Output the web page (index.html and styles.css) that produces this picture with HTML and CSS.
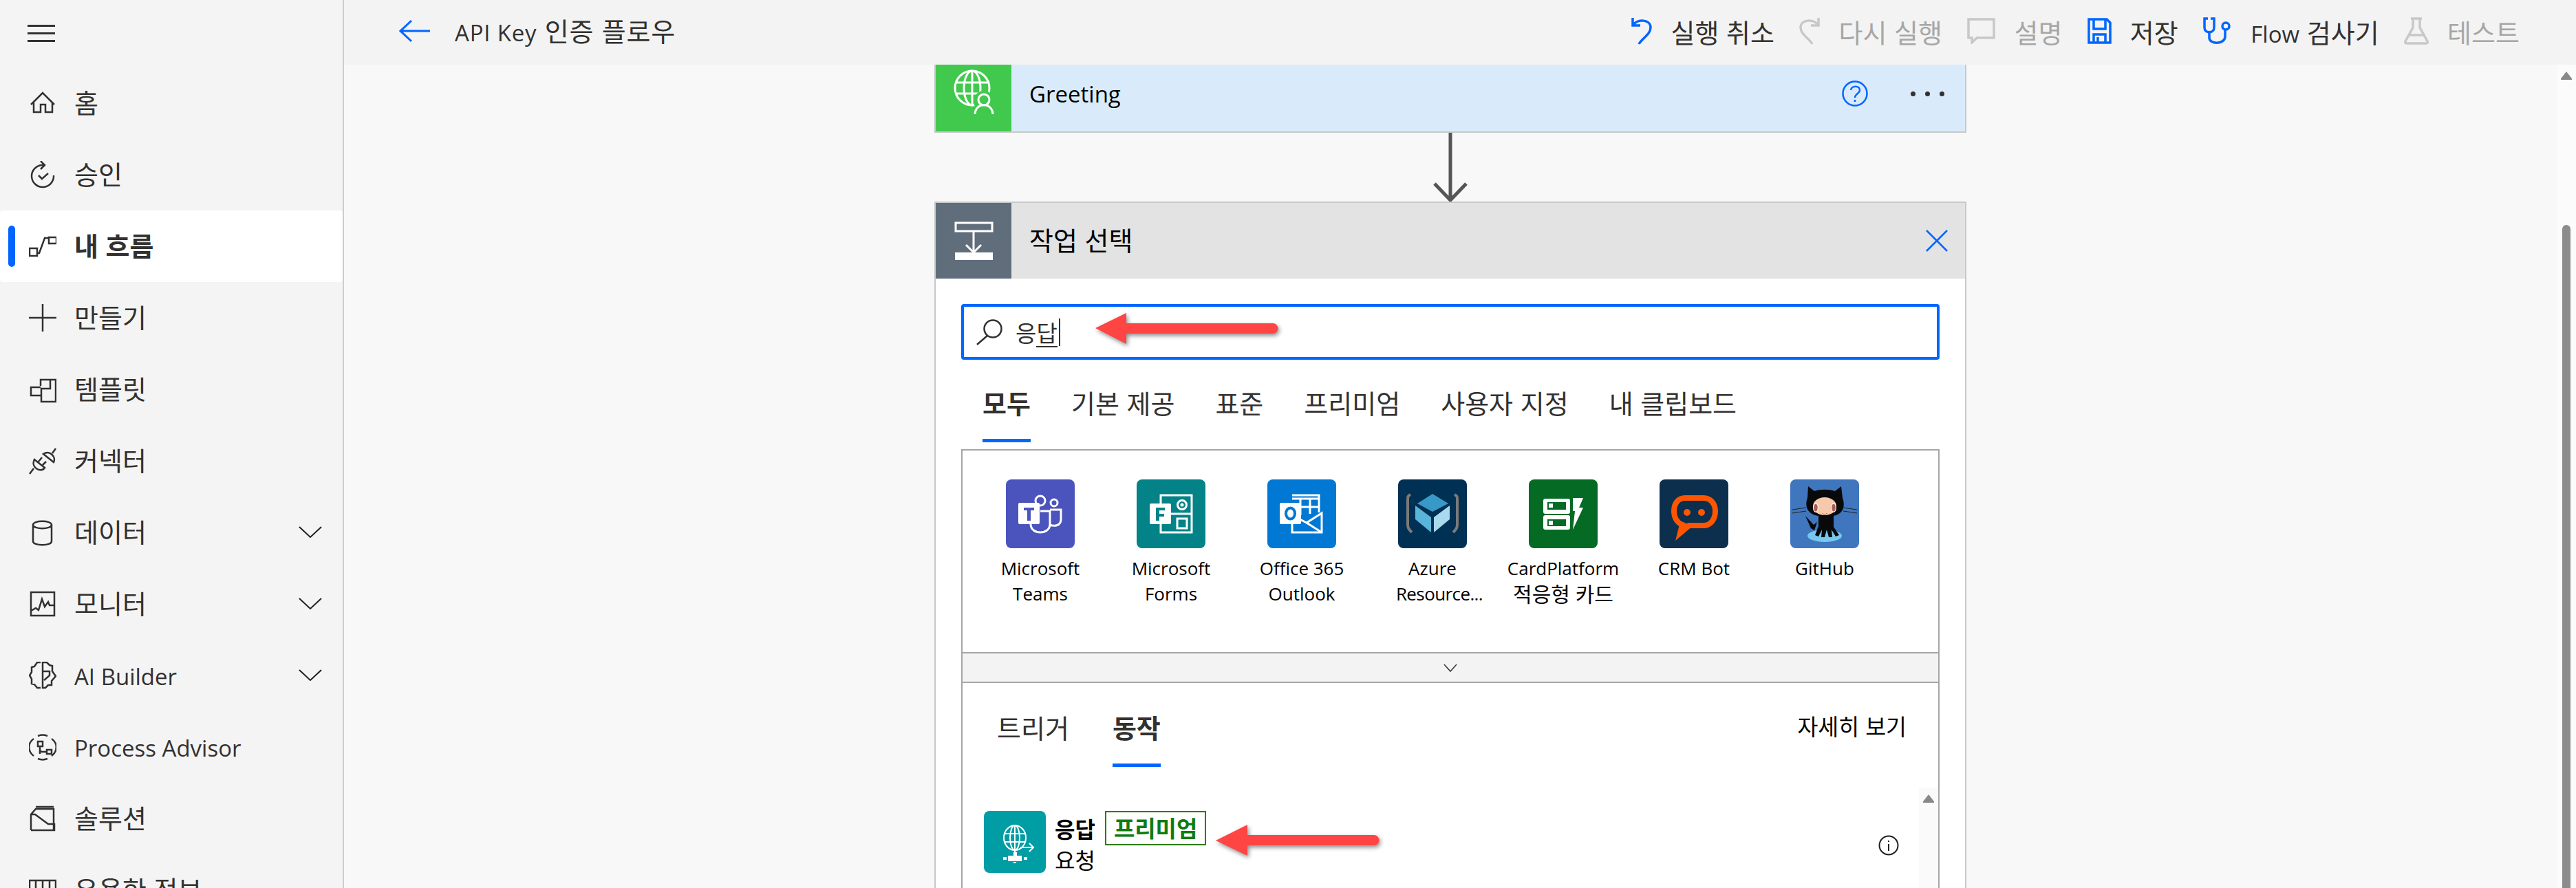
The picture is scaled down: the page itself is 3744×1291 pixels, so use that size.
FILE: index.html
```html
<!DOCTYPE html>
<html lang="ko">
<head>
<meta charset="utf-8">
<title>API Key 인증 플로우</title>
<link rel="stylesheet" href="styles.css">
</head>
<body>
<div class="app">
  <aside class="sidebar">
    <div class="burger-row">
      <svg class="burger" viewBox="0 0 40 25"><path d="M0 1.5H40M0 12.5H40M0 23.5H40"/></svg>
    </div>
    <nav class="nav">
      <a class="nav-item"><svg class="nav-icon" viewBox="0 0 40 40"><path d="M3 22 20 5l17 17M7 19v14h10V22h7v11h10V19"/></svg><span class="ko-label">홈</span></a>
      <a class="nav-item"><svg class="nav-icon" viewBox="0 0 40 40"><path d="M22 6h-3a16 16 0 1 0 17 15M17 0l6 6-6 6M14 21l5 5 9-8"/></svg><span class="ko-label">승인</span></a>
      <a class="nav-item active"><svg class="nav-icon" viewBox="0 0 40 40"><path d="M1 23h11v11H1zM29 7h11v9H29zM12 30h3l8-22h6"/></svg><span class="ko-label">내 흐름</span></a>
      <a class="nav-item"><svg class="nav-icon" viewBox="0 0 40 40"><path d="M20 0v40M0 20h40"/></svg><span class="ko-label">만들기</span></a>
      <a class="nav-item"><svg class="nav-icon" viewBox="0 0 40 40"><path d="M17 15V6h22v32H18v-9H3V17h14M31 6v13H18v10"/></svg><span class="ko-label">템플릿</span></a>
      <a class="nav-item"><svg class="nav-icon" viewBox="0 0 40 40"><path d="M21 10 36 22C40 14 30 4 21 10zM34 9l5-7M8 18 23 30C18 38 2 30 8 18zM7 31l-6 8M14 21l5-6M20 26l5-5"/></svg><span class="ko-label">커넥터</span></a>
      <a class="nav-item"><svg class="nav-icon" viewBox="0 0 40 40"><path d="M6 9c0-7 27-7 27 0v24c0 7-27 7-27 0zM6 9c0 7 27 7 27 0"/></svg><span class="ko-label">데이터</span><svg class="nav-chev" viewBox="0 0 34 18"><path d="M1 1l16 15L33 1"/></svg></a>
      <a class="nav-item"><svg class="nav-icon" viewBox="0 0 40 40"><path d="M3 3h34v34H3zM3 30l7-4 4 3 5-16 4 11 5-7 2 5h7"/></svg><span class="ko-label">모니터</span><svg class="nav-chev" viewBox="0 0 34 18"><path d="M1 1l16 15L33 1"/></svg></a>
      <a class="nav-item"><svg class="nav-icon" viewBox="0 0 40 40"><path d="M17 1h-5l-4 6-4 1v7l-3 5 3 5v7l4 1 4 5h5M21 1h-1v37h4l4-4h5v-6l6-7-5-7V6l-4-1-4-4zM21 14h9v6l-8 7"/></svg><span class="latin nudge">AI Builder</span><svg class="nav-chev" viewBox="0 0 34 18"><path d="M1 1l16 15L33 1"/></svg></a>
      <a class="nav-item"><svg class="nav-icon" viewBox="0 0 40 40"><path d="M7 8C-2 14-2 26 7 33M33 8c9 6 9 18 0 25M13 4c5-2 9-2 14 0M13 37c5 2 9 2 14 0M13 12h7v7h-7zM26 24h7v6h-7zM16 19v4c0 5 3 4 10 4M16 24v6"/></svg><span class="latin nudge">Process Advisor</span></a>
      <a class="nav-item"><svg class="nav-icon" viewBox="0 0 40 40"><path d="M3 37V14l7-8h26v6M10 3h26M36 6v30M3 37h34V28H28L9 14H3"/></svg><span class="ko-label">솔루션</span></a>
      <a class="nav-item"><svg class="nav-icon" viewBox="0 0 40 40"><path d="M1 6h38v30H1zM10 6v30M20 6v30M30 6v30"/></svg><span class="ko-label">유용한 정보</span></a>
    </nav>
  </aside>

  <main class="main">
    <header class="topbar">
      <svg class="back" viewBox="0 0 46 34"><path d="M45 17H2M18 2 2 17l16 15"/></svg>
      <h1 class="title"><span class="latin">API Key</span> 인증 플로우</h1>
      <div class="toolbar">
        <div class="tool"><svg class="tool-icon blue" width="30" height="40" viewBox="0 0 30 40"><path d="M2 1v11h11M3 11C9 2 28 3 28 15c0 10-13 16-17 24"/></svg><span>실행 취소</span></div>
        <div class="tool off"><svg class="tool-icon grey" width="30" height="40" viewBox="0 0 30 40"><path d="M28 1v11H17M27 11C21 2 2 3 2 15c0 10 13 16 17 24"/></svg><span>다시 실행</span></div>
        <div class="tool off"><svg class="tool-icon grey" width="41" height="38" viewBox="0 0 41 38"><path d="M2 2h37v27H14l-7 7v-7H2z"/></svg><span>설명</span></div>
        <div class="tool"><svg class="tool-icon blue" width="35" height="38" viewBox="0 0 35 38"><path d="M2 2h26l5 5v29H2zM9 2v14h17V2M9 36V24h17v12M15 28v8"/></svg><span>저장</span></div>
        <div class="tool"><svg class="tool-icon blue" width="42" height="40" viewBox="0 0 42 40"><path d="M7 2H2v13c0 9 14 9 14 0V2h-5M9 23v7c0 10 23 10 23-2V18"/><circle cx="33" cy="13" r="5"/></svg><span><span class="latin">Flow</span> 검사기</span></div>
        <div class="tool off"><svg class="tool-icon grey" width="36" height="40" viewBox="0 0 36 40"><path d="M10 2h16M13 2v13L2 35c-1 2 0 3 2 3h28c2 0 3-1 2-3L23 15V2M7 26h22"/></svg><span>테스트</span></div>
      </div>
    </header>

    <section class="canvas">
      <div class="flow">
        <article class="card greet">
          <div class="card-head">
            <div class="card-icon green">
              <svg width="110" height="110" viewBox="0 0 110 110"><g class="ws"><circle cx="53" cy="47" r="25"/><ellipse cx="53" cy="47" rx="12" ry="25"/><path d="M53 22v50M29 39h49M29 55h49"/></g><circle cx="70" cy="66" r="15" fill="#41c94e"/><g class="ws"><circle cx="70" cy="64" r="8"/><path d="M57 85c1-18 25-18 26 0"/></g></svg>
            </div>
            <span class="card-title latin-black">Greeting</span>
            <svg class="help" width="38" height="38" viewBox="0 0 38 38"><circle cx="19" cy="19" r="17.5"/><path d="M13 14c1-7 13-7 13 0 0 5-7 5-7 11"/><path d="M19 28v3"/></svg>
            <div class="dots"><i></i><i></i><i></i></div>
          </div>
        </article>

        <div class="link"><svg width="60" height="100" viewBox="0 0 60 100"><path class="link-path" d="M30 0v97M7 74l23 24 23-24"/></svg></div>

        <article class="card action">
          <div class="card-head grey-head">
            <div class="card-icon slate">
              <svg width="110" height="110" viewBox="0 0 110 110"><g class="ws"><path d="M29 29h53v12H29zM55 41v31M44 61l11 11 11-11"/></g><path class="wf" d="M28 72h55v11H28z"/></svg>
            </div>
            <span class="card-title ko-label">작업 선택</span>
            <svg class="close" width="32" height="32" viewBox="0 0 32 32"><path d="M1 1l30 30M31 1 1 31"/></svg>
          </div>
          <div class="card-body">
            <div class="search">
              <svg class="mag" width="38" height="38" viewBox="0 0 38 38"><circle cx="24" cy="14" r="12.5"/><path d="M16 24 1 37"/></svg>
              <span class="query">응<span class="composing">답</span></span><i class="caret"></i>
            </div>
            <div class="tabs">
              <span class="tab on">모두</span><span class="tab">기본 제공</span><span class="tab">표준</span><span class="tab">프리미엄</span><span class="tab">사용자 지정</span><span class="tab">내 클립보드</span>
            </div>
            <div class="grid">
              <div class="tile">
                <svg class="tile-icon" viewBox="0 0 100 100"><rect width="100" height="100" fill="#4b53bc"/><g class="wt"><circle cx="50" cy="31" r="7"/><circle cx="70" cy="34" r="5"/><path d="M36 65c0 16 28 16 28 0V46H50M64 44h16v14c0 9-9 11-16 8"/></g><rect x="18" y="34" width="31" height="31" rx="2" fill="#fff"/><path d="M26 41h15v4h-5v15h-5V45h-5z" fill="#4b53bc"/></svg>
                <p>Microsoft<br>Teams</p>
              </div>
              <div class="tile">
                <svg class="tile-icon" viewBox="0 0 100 100"><rect width="100" height="100" fill="#038387"/><g class="wt"><path d="M35 23h45v54H35zM49 50h31"/><circle cx="66" cy="37" r="6.5"/><path d="M59 57h14v14H59z"/></g><circle cx="66" cy="37" r="2.5" fill="#fff"/><rect x="19" y="35" width="31" height="30" rx="2" fill="#fff"/><path d="M28 41h13v4h-8v5h7v4h-7v6h-5z" fill="#038387"/></svg>
                <p>Microsoft<br>Forms</p>
              </div>
              <div class="tile">
                <svg class="tile-icon" viewBox="0 0 100 100"><rect width="100" height="100" fill="#0078d4"/><g class="wt"><path d="M36 23h39v25M36 28h39M36 40h39M48 28v24M62 28v22M36 65v12h43V49L57 63 36 52"/><path d="M79 77 57 63"/></g><rect x="18" y="34" width="31" height="31" rx="2" fill="#fff"/><ellipse cx="33.500" cy="49.500" rx="6.500" ry="8" fill="none" stroke="#0078d4" stroke-width="4"/></svg>
                <p>Office 365<br>Outlook</p>
              </div>
              <div class="tile">
                <svg class="tile-icon" viewBox="0 0 100 100"><rect width="100" height="100" fill="#003054"/><path d="M18 22c-4 2-4 3-4 8v35c0 5 1 7 6 12M82 22c4 2 4 3 4 8v35c0 5-1 7-6 12" fill="none" stroke="#7a7a7a" stroke-width="4"/><path d="M50 21 73 35 50 47 28 35z" fill="#3999c6"/><path d="M25 38 48 55v22L25 58z" fill="#59b4d9"/><path d="M52 55 75 38v20L52 77z" fill="#a9d9ec"/></svg>
                <p>Azure<br><span class="overflowed">Resource...</span></p>
              </div>
              <div class="tile">
                <svg class="tile-icon" viewBox="0 0 100 100"><rect width="100" height="100" fill="#056a24"/><rect x="21" y="28" width="39" height="22" rx="3" fill="#fff"/><rect x="21" y="52" width="39" height="21" rx="3" fill="#fff"/><rect x="27" y="33" width="27" height="11" fill="#056a24"/><rect x="27" y="58" width="27" height="10" fill="#056a24"/><rect x="29" y="35" width="6" height="6" fill="#fff"/><rect x="29" y="60" width="6" height="6" fill="#fff"/><path d="M64 27h15l-6 14h6L64 73l3-27h-3z" fill="#fff"/></svg>
                <p>CardPlatform<br><span class="ko">적응형 카드</span></p>
              </div>
              <div class="tile">
                <svg class="tile-icon" viewBox="0 0 100 100"><rect width="100" height="100" fill="#0c2f4d"/><path d="M37 27h27c10 0 17 8 17 19 0 12-7 21-17 21H43L30 78l3-12C26 63 21 56 21 46c0-11 6-19 16-19z" fill="none" stroke="#ff5500" stroke-width="8"/><path d="M28 82 34 62l13 5z" fill="#ff5500"/><circle cx="40" cy="48" r="5" fill="#ff5500"/><circle cx="61" cy="48" r="5" fill="#ff5500"/></svg>
                <p>CRM Bot</p>
              </div>
              <div class="tile">
                <svg class="tile-icon" viewBox="0 0 100 100"><rect width="100" height="100" fill="#3f76bd"/><ellipse cx="50" cy="82" rx="25" ry="9" fill="#75c8ef"/><path d="M26 10l9 7c9-3 21-3 30 0l9-7 2 17c5 14-1 24-13 26v16l8 12-5 2-6-10 1 11h-5l-3-11-3 11h-5l1-11-5 10-5-2 5-13V53C26 51 20 40 25 27z" fill="#07090b"/><ellipse cx="50" cy="39" rx="17" ry="13" fill="#f6c9ac"/><ellipse cx="37" cy="41" rx="4" ry="7" fill="#f6f6f6"/><ellipse cx="63" cy="41" rx="4" ry="7" fill="#f6f6f6"/><ellipse cx="37" cy="41" rx="2.800" ry="5.500" fill="#ad5c51"/><ellipse cx="63" cy="41" rx="2.800" ry="5.500" fill="#ad5c51"/><path d="M3 44l20-3M3 49l20-3M97 44l-20-3M97 49l-20-3" stroke="#222" stroke-width="1"/><path d="M47 49c2 3 4 3 6 0" fill="none" stroke="#ad5c51" stroke-width="1"/><path d="M22 53l12 13 5-4-4 12-5-3z" fill="#07090b"/></svg>
                <p>GitHub</p>
              </div>
            </div>
            <div class="strip"><svg width="20" height="12" viewBox="0 0 20 12"><path d="M1 1l9 10 9-10"/></svg></div>
            <div class="lower">
              <div class="lower-head">
                <div class="lower-tabs"><span class="tab">트리거</span><span class="tab on">동작</span></div>
                <a class="more">자세히 보기</a>
              </div>
              <div class="row">
                <svg class="row-icon" viewBox="0 0 90 90"><rect width="90" height="90" fill="#009da5"/><g class="wt thin"><ellipse cx="45" cy="39" rx="16" ry="18"/><ellipse cx="45" cy="39" rx="7" ry="18"/><path d="M29 33h32M29 45h32M45 21v40M53 53h19M66 47l6 6-6 6"/></g><path d="M43 60h5v5h-5zM35 65h20v8H35zM28 67h5v4h-5zM58 67h5v4h-5zM43 74h4v2h-4z" fill="#fff"/></svg>
                <div class="row-text">
                  <div class="row-top"><b>응답</b><span class="badge">프리미엄</span></div>
                  <div class="row-sub">요청</div>
                </div>
                <svg class="info" width="30" height="30" viewBox="0 0 30 30"><circle cx="15" cy="15" r="13.500"/><path d="M15 13v10M15 8v2"/></svg>
              </div>
              <div class="inner-scroll"><i class="tri"></i></div>
            </div>
          </div>
        </article>
      </div>
      <div class="scrollbar"><i class="tri"></i><i class="thumb"></i></div>
    </section>
  </main>

  <svg class="note note-a" width="270" height="60" viewBox="0 0 270 60"><path d="M2 27 47 5v15h213a7.500 7.500 0 0 1 0 15H47v15z"/></svg>
  <svg class="note note-b" width="250" height="56" viewBox="0 0 250 56"><path d="M2 24 48 1v15h184a7.500 7.500 0 0 1 0 15H48v15z"/></svg>
</div>
</body>
</html>
```

FILE: styles.css
```css
* { box-sizing: border-box; }
html, body { margin: 0; height: 100%; overflow: hidden; }
body {
  font-family: "Noto Sans CJK KR", "Open Sans", sans-serif;
  font-size: 38px;
  color: #323130;
  background: #f8f8f8;
}
svg { display: block; flex: none; fill: none; }
p, h1 { margin: 0; }

.app { position: relative; display: flex; width: 3744px; height: 1291px; overflow: hidden; }
.latin { font-family: "Open Sans", sans-serif; font-size: 33px; }
.ko-label { padding-bottom: 5px; }
.nudge { padding-top: 2px; }

/* sidebar */
.sidebar { width: 500px; flex: none; background: #f4f4f4; border-right: 2px solid #cdcdcd; }
.burger-row { height: 98px; padding: 36px 0 0 40px; }
.burger { width: 40px; height: 25px; stroke: #323130; stroke-width: 3; }
.nav-item { position: relative; display: flex; align-items: center; height: 104px; padding: 0 30px 0 42px; gap: 26px; border-radius: 4px; }
.nav-item.active { background: #fff; font-weight: 700; }
.nav-item.active::before { content: ""; position: absolute; left: 12px; top: 22px; width: 10px; height: 60px; border-radius: 5px; background: #0066ff; }
.nav-icon { width: 40px; height: 40px; stroke: #323130; stroke-width: 2.500; }
.nav-chev { width: 34px; height: 18px; margin-left: auto; stroke: #201f1e; stroke-width: 2; }

/* main */
.main { flex: 1; display: flex; flex-direction: column; min-width: 0; }
.topbar { height: 94px; flex: none; display: flex; align-items: center; padding: 0 82px 4px 80px; background: #f3f3f3; }
.back { width: 46px; height: 34px; stroke: #0066ff; stroke-width: 3; }
.title { margin-left: 35px; padding-bottom: 3px; font-size: 38px; font-weight: 400; letter-spacing: .8px; }
.toolbar { display: flex; align-items: center; gap: 36.500px; margin-left: auto; }
.tool { display: flex; align-items: center; gap: 27px; }
.tool.off { color: #a6a6a6; }
.tool-icon { stroke-width: 3.500; }
.blue { stroke: #0066ff; }
.grey { stroke: #c8c8c8; }

/* canvas */
.canvas { position: relative; flex: 1; display: flex; justify-content: center; padding-right: 28px; overflow: hidden; }
.flow { width: 1500px; flex: none; }
.card { border: 2px solid #c8c8c8; background: #fff; }
.greet { margin-top: -13px; border-top: 0; }
.card-head { display: flex; align-items: center; height: 110px; background: #d9ebfb; padding-right: 25px; color: #000; }
.grey-head { background: #e3e3e3; }
.card-icon { width: 110px; height: 110px; flex: none; }
.green { background: #41c94e; }
.slate { background: #606e7c; }
.ws { stroke: #fff; stroke-width: 3; }
.wf { fill: #fff; }
.card-title { margin-left: 26px; flex: 1; }
.latin-black { font-family: "Open Sans", sans-serif; font-size: 33px; }
.help { stroke: #0066ff; stroke-width: 2.500; margin-right: 62px; }
.dots { display: flex; gap: 14px; margin-right: 5px; }
.dots i { width: 7px; height: 7px; border-radius: 50%; background: #323130; }
.close { stroke: #0066ff; stroke-width: 2.500; }
.link { display: flex; justify-content: center; height: 100px; }
.link-path { stroke: #555; stroke-width: 5; }
.card-body { padding: 37px 37px 0; }

/* search */
.search { display: flex; align-items: center; height: 81px; padding-left: 18px; border: 4.500px solid #0066ff; border-radius: 4px; }
.mag { stroke: #323130; stroke-width: 2.500; }
.query { margin-left: 19px; font-size: 33px; }
.composing { border-bottom: 2px solid #323130; line-height: 40px; display: inline-block; }
.caret { width: 2px; height: 40px; margin-left: 2px; background: #323130; }

/* tabs */
.tabs { display: flex; gap: 59px; height: 120px; margin-bottom: 10px; padding-left: 31px; }
.tab { height: 120px; padding: 37px 0 28px; line-height: 50px; font-size: 38px; white-space: nowrap; }
.tab.on { font-weight: 700; border-bottom: 5px solid #0066ff; }

/* grid */
.grid { display: flex; height: 297px; padding: 42px 0 0 18px; border: 2px solid #a6a6a6; }
.tile { width: 190px; flex: none; text-align: center; color: #000; font-family: "Open Sans", "Noto Sans CJK KR", sans-serif; font-size: 26px; line-height: 37px; }
.tile-icon { width: 100px; height: 100px; margin: 0 auto 11px; border-radius: 8px; }
.overflowed { display: inline-block; padding-left: 20px; letter-spacing: -.6px; }
.ko { font-size: 30px; }
.wt { stroke: #fff; stroke-width: 3; fill: none; }
.strip { display: flex; align-items: center; justify-content: center; height: 43px; background: #f3f3f3; border: 2px solid #a6a6a6; border-top: 0; }
.strip svg { stroke: #323130; stroke-width: 1.500; }

/* lower */
.lower { position: relative; height: 330px; border: 2px solid #a6a6a6; border-width: 0 2px; }
.lower-head { display: flex; justify-content: space-between; height: 122px; padding: 0 46px 0 50px; }
.lower-tabs { display: flex; gap: 63px; }
.lower .tab { height: 122px; padding: 39px 0 28px; }
.more { padding-top: 37px; line-height: 50px; font-size: 32.500px; color: #000; }
.row { display: flex; margin-top: 64px; padding: 0 57px 0 31px; }
.row-icon { width: 90px; height: 90px; border-radius: 8px; }
.wt.thin { stroke-width: 2; }
.row-text { margin-left: 13px; color: #000; font-size: 32px; }
.row-top { display: flex; align-items: center; height: 50px; gap: 14px; }
.row-top b { font-weight: 700; }
.badge { display: block; height: 50px; padding: 0 11px; line-height: 44px; border: 2px solid #2e7d0c; color: #107c10; font-weight: 700; font-size: 33px; }
.row-sub { line-height: 40px; }
.info { margin: 35px 0 0 auto; stroke: #201f1e; stroke-width: 2; }
.inner-scroll { position: absolute; right: 0; top: 152px; bottom: 0; width: 28px; background: #fafafa; }

/* scrollbars */
.scrollbar { position: absolute; right: 0; top: 0; bottom: 0; width: 28px; background: #fbfbfb; }
.tri { position: absolute; left: 6px; top: 10px; width: 16px; height: 12px; background: #888; clip-path: polygon(50% 0, 100% 85%, 100% 100%, 0 100%, 0 85%); }
.thumb { position: absolute; left: 8px; top: 233px; bottom: 0; width: 12px; border-radius: 6px 6px 0 0; background: #8c8c8c; }

/* annotation arrows */
.note { position: absolute; fill: #ff4444; filter: drop-shadow(2px 3px 3px rgba(0,0,0,.45)); }
.note-a { left: 1590px; top: 450px; }
.note-b { left: 1765px; top: 1198px; }
```
